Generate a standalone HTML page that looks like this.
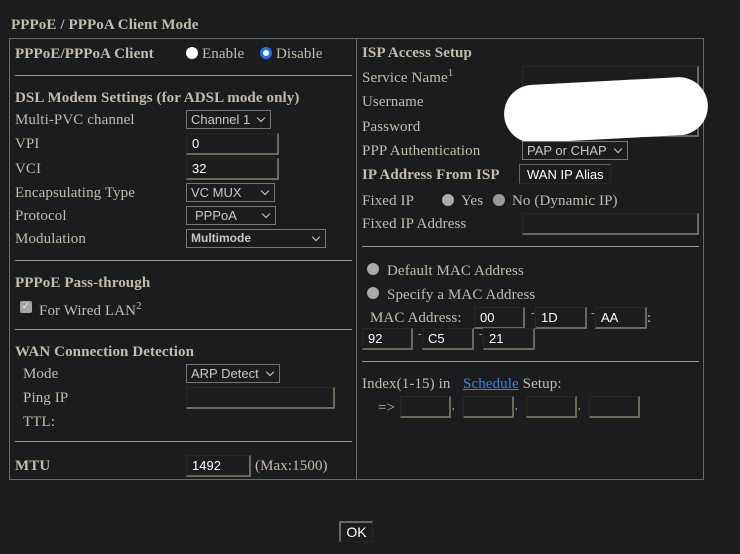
<!DOCTYPE html>
<html><head><meta charset="utf-8"><style>
body{margin:0;width:740px;height:554px;background:#1b1c1e;position:relative;overflow:hidden;font-family:"Liberation Serif",serif;font-size:15px;color:#c4bcae}
.a{position:absolute;white-space:nowrap;padding-top:1px;letter-spacing:0.1px}
b{font-weight:bold}
.hl{position:absolute;height:1px;background:#9a9a9a}
.in{position:absolute;box-sizing:border-box;border-top:1px solid #2a2620;border-left:1px solid #2a2620;border-right:2px solid #6f675a;border-bottom:2px solid #6f675a;background:#1b1c1e;color:#fff;font-family:"Liberation Sans",sans-serif;font-size:13px;padding:2px 0 0 5px;height:22px}
.sel{position:absolute;box-sizing:border-box;border:1px solid #777;background:#1b1c1e;color:#c8c8c8;font-family:"Liberation Sans",sans-serif;font-size:13px;padding:1px 0 0 4px;height:19px}
.sel:after{content:"";position:absolute;right:6px;top:4px;width:5px;height:5px;border-right:1.5px solid #ccc;border-bottom:1.5px solid #ccc;transform:rotate(45deg)}
.rad{position:absolute;width:12px;height:12px;border-radius:50%;background:#aaa}
</style></head><body>
<div class="a" style="left:11px;top:16px"><b>PPPoE / PPPoA Client Mode</b></div>
<div style="position:absolute;left:9px;top:38px;width:695px;height:442px;box-sizing:border-box;border:1px solid #6a6a6a"></div>
<div style="position:absolute;left:356px;top:38px;width:1px;height:442px;background:#6a6a6a"></div>

<div class="a" style="left:15px;top:45px"><b>PPPoE/PPPoA Client</b></div>
<div class="rad" style="left:186px;top:47px;background:#fff"></div>
<div class="a" style="left:202px;top:45px">Enable</div>
<div class="rad" style="left:260px;top:47px;background:#fff;box-sizing:border-box;border:3px solid #1a73e8"></div>
<div class="a" style="left:276px;top:45px">Disable</div>
<div class="hl" style="left:15px;top:75px;width:337px"></div>

<div class="a" style="left:15px;top:89px"><b>DSL Modem Settings (for ADSL mode only)</b></div>
<div class="a" style="left:15px;top:111px">Multi-PVC channel</div>
<div class="sel" style="left:186px;top:110px;width:85px">Channel 1</div>
<div class="a" style="left:15px;top:135px">VPI</div>
<div class="in" style="left:186px;top:133px;width:93px">0</div>
<div class="a" style="left:15px;top:160px">VCI</div>
<div class="in" style="left:186px;top:158px;width:93px">32</div>
<div class="a" style="left:15px;top:184px">Encapsulating Type</div>
<div class="sel" style="left:186px;top:183px;width:89px">VC MUX</div>
<div class="a" style="left:15px;top:207px">Protocol</div>
<div class="sel" style="left:186px;top:206px;width:90px;padding-left:8px">PPPoA</div>
<div class="a" style="left:15px;top:230px">Modulation</div>
<div class="sel" style="left:186px;top:229px;width:140px;font-size:12px;font-weight:bold">Multimode</div>
<div class="hl" style="left:15px;top:260px;width:337px"></div>

<div class="a" style="left:15px;top:274px"><b>PPPoE Pass-through</b></div>
<div style="position:absolute;left:20px;top:301px;width:12px;height:12px;background:#a5a5a5;border-radius:2px;color:#eee;font-size:10px;line-height:12px;text-align:center;font-family:'DejaVu Sans',sans-serif">✓</div>
<div class="a" style="left:39px;top:299px">For Wired LAN<sup style="font-size:11px">2</sup></div>
<div class="hl" style="left:15px;top:329px;width:337px"></div>

<div class="a" style="left:15px;top:343px"><b>WAN Connection Detection</b></div>
<div class="a" style="left:23px;top:365px">Mode</div>
<div class="sel" style="left:186px;top:364px;width:94px">ARP Detect</div>
<div class="a" style="left:23px;top:389px">Ping IP</div>
<div class="in" style="left:186px;top:387px;width:149px"></div>
<div class="a" style="left:23px;top:413px">TTL:</div>
<div class="hl" style="left:15px;top:441px;width:337px"></div>
<div class="a" style="left:15px;top:457px"><b>MTU</b></div>
<div class="in" style="left:186px;top:455px;width:65px">1492</div>
<div class="a" style="left:255px;top:457px">(Max:1500)</div>

<div class="a" style="left:362px;top:44px"><b>ISP Access Setup</b></div>
<div class="a" style="left:362px;top:69px">Service Name<sup style="font-size:11px;line-height:0">1</sup></div>
<div class="a" style="left:362px;top:93px">Username</div>
<div class="a" style="left:362px;top:118px">Password</div>
<div class="in" style="left:522px;top:66px;width:177px;height:71px"></div>
<div style="position:absolute;left:504px;top:81px;width:204px;height:58px;background:#fff;border-radius:29px;transform:rotate(-3deg)"></div>
<div class="a" style="left:362px;top:142px">PPP Authentication</div>
<div class="sel" style="left:522px;top:141px;width:106px">PAP or CHAP</div>
<div class="a" style="left:362px;top:166px"><b>IP Address From ISP</b></div>
<div style="position:absolute;left:519px;top:164px;width:92px;height:20px;box-sizing:border-box;border-top:1px solid #6f675a;border-left:1px solid #6f675a;border-right:1px solid #2a2620;border-bottom:1px solid #2a2620;color:#fff;font-family:'Liberation Sans',sans-serif;font-size:13px;padding:2px 0 0 7px">WAN IP Alias</div>
<div class="a" style="left:362px;top:192px">Fixed IP</div>
<div class="rad" style="left:442px;top:194px"></div>
<div class="a" style="left:461px;top:192px">Yes</div>
<div class="rad" style="left:493px;top:194px;background:#999"></div>
<div class="a" style="left:512px;top:192px">No (Dynamic IP)</div>
<div class="a" style="left:362px;top:215px">Fixed IP Address</div>
<div class="in" style="left:522px;top:213px;width:177px"></div>
<div class="hl" style="left:362px;top:246px;width:337px"></div>

<div class="rad" style="left:367px;top:263px"></div>
<div class="a" style="left:387px;top:262px">Default MAC Address</div>
<div class="rad" style="left:367px;top:287px"></div>
<div class="a" style="left:387px;top:286px">Specify a MAC Address</div>
<div class="a" style="left:370px;top:309px">MAC Address:</div>
<div class="in" style="left:474px;top:307px;width:51px">00</div>
<div class="a" style="left:531px;top:307px;font-size:10px">-</div>
<div class="in" style="left:535px;top:307px;width:52px">1D</div>
<div class="a" style="left:591px;top:307px;font-size:10px">-</div>
<div class="in" style="left:595px;top:307px;width:52px">AA</div>
<div class="a" style="left:647px;top:309px">:</div>
<div class="in" style="left:362px;top:328px;width:51px">92</div>
<div class="a" style="left:418px;top:328px;font-size:10px">-</div>
<div class="in" style="left:422px;top:328px;width:52px">C5</div>
<div class="a" style="left:479px;top:328px;font-size:10px">-</div>
<div class="in" style="left:483px;top:328px;width:52px">21</div>
<div class="hl" style="left:362px;top:361px;width:337px"></div>

<div class="a" style="left:362px;top:375px">Index(1-15) in</div>
<div class="a" style="left:463px;top:375px"><span style="color:#3b82f6;text-decoration:underline">Schedule</span> Setup:</div>
<div class="a" style="left:378px;top:399px">=&gt;</div>
<div class="in" style="left:400px;top:396px;width:51px"></div>
<div class="a" style="left:452px;top:400px;font-size:10px">,</div>
<div class="in" style="left:463px;top:396px;width:51px"></div>
<div class="a" style="left:515px;top:400px;font-size:10px">,</div>
<div class="in" style="left:526px;top:396px;width:51px"></div>
<div class="a" style="left:578px;top:400px;font-size:10px">,</div>
<div class="in" style="left:589px;top:396px;width:51px"></div>

<div style="position:absolute;left:339px;top:521px;width:34px;height:21px;box-sizing:border-box;border-top:2px solid #6f675a;border-left:2px solid #6f675a;border-right:1px solid #2a2620;border-bottom:1px solid #2a2620;color:#fff;font-family:'Liberation Sans',sans-serif;font-size:14px;text-align:center;line-height:18px">OK</div>
</body></html>
